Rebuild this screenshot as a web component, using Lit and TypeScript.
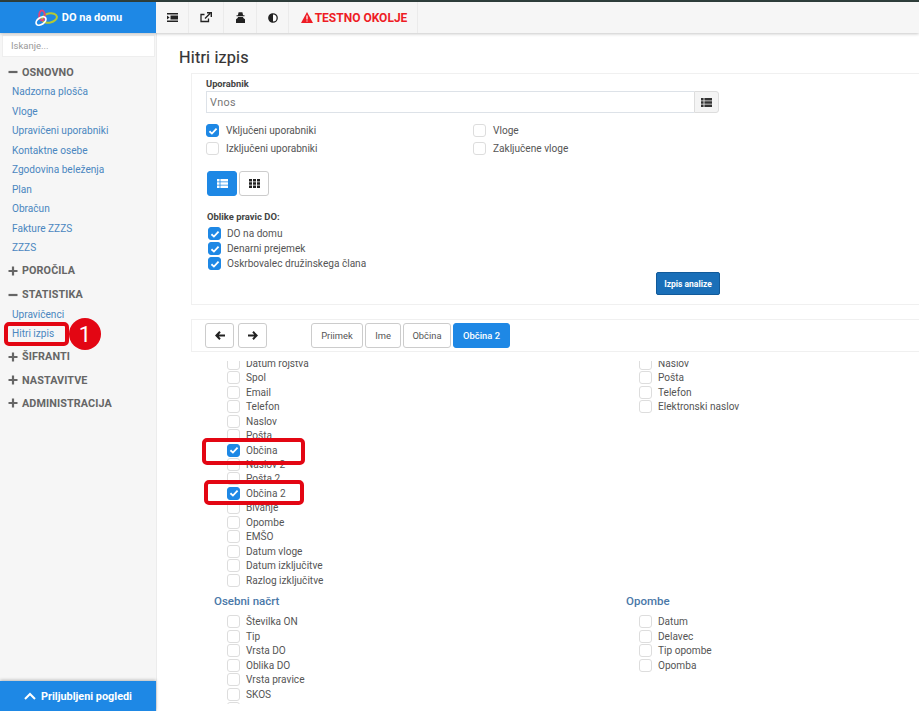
import { LitElement, html, css } from "lit";
import { customElement } from "lit/decorators.js";

const check = html`<svg viewBox="0 0 14 14" width="10" height="10"><path d="M2 7.4 5.5 10.6 12 3.8" fill="none" stroke="#fff" stroke-width="2.6"/></svg>`;
const cb = (on: boolean) => html`<span class="cb ${on ? "on" : ""}">${on ? check : ""}</span>`;
const row = (label: string, on = false) => html`<div class="row">${cb(on)}<span>${label}</span></div>`;

const plus = html`<svg class="pm" viewBox="0 0 10 10"><path d="M5 .5v9M.5 5h9" stroke="#666" stroke-width="2.2" fill="none"/></svg>`;
const minus = html`<svg class="pm" viewBox="0 0 10 10"><path d="M.5 5h9" stroke="#666" stroke-width="2.2" fill="none"/></svg>`;

@customElement("app-root")
export class AppRoot extends LitElement {
  static styles = css`
    :host { display: block; width: 919px; height: 711px; overflow: hidden; position: relative; background: #fff;
      font-family: Roboto, "Liberation Sans", sans-serif; color: #555; font-size: 10.1px; }
    .top { height: 2px; background: #2f3f3c; }
    .bar { height: 31px; display: flex; background: #f6f6f6; box-shadow: 0 1px 3px rgba(0,0,0,.22); position: relative; z-index: 2; }
    .brand { width: 156px; background: #1e88e5; display: flex; align-items: center; justify-content: center; gap: 4px; color: #fff;
      font-weight: 700; font-size: 11px; box-sizing: border-box; padding-right: 0; }
    .tool { display: flex; align-items: center; justify-content: center; border-right: 1px solid #ebebeb; height: 100%; box-sizing: border-box; }
    .t1 { width: 33px; } .t2 { width: 35px; } .t3 { width: 33px; } .t4 { width: 32px; }
    .warn { width: 129px; gap: 2px; color: #ee1c25; font-weight: 700; font-size: 12px; padding-left: 2px; }
    .main { display: flex; height: 678px; }
    aside { width: 157px; flex: none; background: #f6f6f6; border-right: 1px solid #ececec; box-sizing: border-box; display: flex; flex-direction: column; position: relative; }
    .search { margin: 2px 1px 0 2px; height: 22px; background: #fff; border: 1px solid #eee; box-sizing: border-box; color: #999; font-size: 9.5px; line-height: 20px; padding-left: 8px; }
    nav { flex: 1; padding-top: 5.7px; }
    .h { display: flex; align-items: center; height: 19.5px; padding-left: 8px; gap: 4px; font-weight: 700; font-size: 10.8px; color: #666; letter-spacing: .1px; }
    .g1 { margin-top: 3.2px; } .g2 { margin-top: 4.8px; } .g3 { margin-top: 4px; } .g4 { margin-top: 3.6px; }
    .pm { width: 10px; height: 10px; flex: none; }
    .l { height: 19.5px; line-height: 19.5px; padding-left: 12px; color: #4a86c0; font-size: 10.1px; }
    .fav { height: 30px; background: #1e88e5; color: #fff; font-weight: 700; font-size: 10.85px; display: flex; align-items: center; justify-content: center; gap: 5px; box-shadow: 0 -1px 3px rgba(0,0,0,.25); }
    .content { flex: 1; min-width: 0; padding-left: 23px; display: flex; flex-direction: column; }
    h1 { margin: 15px 0 5px -1px; font-size: 16.2px; line-height: 20px; font-weight: 400; color: #333; -webkit-text-stroke: .2px #333; letter-spacing: .2px; }
    .panel { margin-left: 11px; border: 1px solid #f0f0f0; border-right: 0; box-sizing: border-box; }
    .p1 { height: 232px; padding: 4px 14px 0; position: relative; }
    .lab { font-weight: 700; font-size: 9.3px; color: #444; line-height: 12px; }
    .inp { display: flex; width: 513px; height: 22px; margin-top: 1px; }
    .inp .f { flex: 1; border: 1px solid #dde2e8; border-right: 0; color: #777; font-size: 10.8px; line-height: 22px; padding-left: 3px; letter-spacing: .3px; }
    .inp .b { width: 25px; background: #f4f4f4; border: 1px solid #ddd; border-radius: 0 3px 3px 0; display: flex; align-items: center; justify-content: center; box-sizing: border-box; }
    .opts { display: grid; grid-template-columns: 267px auto; margin-top: 9px; }
    .opts .row { height: 17.6px; gap: 7px; }
    .row { display: flex; align-items: center; height: 14.47px; gap: 6px; white-space: nowrap; font-size: 10.1px; color: #555; }
    .cb { width: 13px; height: 13px; flex: none; box-sizing: border-box; border: 1px solid #ddd; border-radius: 3px; background: #fff; display: inline-flex; align-items: center; justify-content: center; }
    .cb.on { background: #1e88e5; border-color: #1e88e5; }
    .views { display: flex; gap: 2px; margin: 14px 0 0 1px; }
    .vb { width: 30px; height: 25px; box-sizing: border-box; border: 1px solid #ccc; border-radius: 3px; display: flex; align-items: center; justify-content: center; }
    .vb.on { background: #1e88e5; border-color: #1e88e5; }
    .lab2 { margin: 15px 0 3px 1px; font-size: 9.45px; }
    .forms { margin-left: 2px; }
    .forms .row { height: 15.1px; }
    .go { position: absolute; left: 464px; top: 198px; width: 64px; height: 23px; box-sizing: border-box; background: #1a6fb8; border: 1px solid #115a9a; border-radius: 2px; color: #fff; font-weight: 700; font-size: 8.5px; display: flex; align-items: center; justify-content: center; }
    .p2 { margin-top: 14px; height: 33px; padding: 3px 14px 3px 13px; display: flex; gap: 2px; box-sizing: border-box; }
    .btn { height: 25px; box-sizing: border-box; border: 1px solid #ccc; border-radius: 3px; background: #fff; display: flex; align-items: center; justify-content: center; font-size: 9.4px; color: #555; }
    .btn.active { background: #1e88e5; border-color: #1e88e5; color: #fff; font-weight: 500; }
    .arr { width: 29px; margin-right: 2px; }
    .sp { width: 38px; }
    .w52 { width: 52px; } .w36 { width: 36px; } .w48 { width: 48px; } .w57 { width: 57px; }
    .scroll { flex: 1; min-height: 0; overflow: hidden; margin: 9px 0 7px; }
    .grid { display: grid; grid-template-columns: 412px 1fr; margin: -5px 0 0 11px; padding-left: 23px; }
    .grid h3 { margin: 4px 0 0 0; font-size: 11.5px; line-height: 19px; font-weight: 500; color: #4a78a8; height: 23px; }
    .list { padding-left: 13px; }
    .mark { position: absolute; border: 4px solid #e30613; border-radius: 5px; box-sizing: border-box; pointer-events: none; z-index: 3; }
    .m1 { left: 4px; top: 322px; width: 65px; height: 24px; }
    .m2 { left: 202px; top: 438px; width: 103px; height: 27px; }
    .m3 { left: 204px; top: 480px; width: 100px; height: 25px; }
    .num { position: absolute; left: 69px; top: 318px; width: 32px; height: 32px; border-radius: 50%; background: #e30613; color: #fff; font-size: 22px; display: flex; align-items: center; justify-content: center; z-index: 3; }
  `;

  render() {
    const logo = html`<svg width="24" height="20" viewBox="0 0 24 20">
      <ellipse cx="15.5" cy="10" rx="7.5" ry="4.6" fill="none" stroke="#b5c934" stroke-width="2" transform="rotate(-12 15.5 10)"/>
      <ellipse cx="8" cy="7.5" rx="2.8" ry="5" fill="none" stroke="#e0457b" stroke-width="2"/>
      <ellipse cx="7" cy="13" rx="5.5" ry="3.4" fill="none" stroke="#fff" stroke-width="1.8" transform="rotate(-35 7 13)"/>
    </svg>`;
    const listIcon = (c: string) => html`<svg width="11" height="9" viewBox="0 0 11 9"><path fill="${c}" d="M0 0h2.6v2.4H0zM3.4 0H11v2.4H3.4zM0 3.3h2.6v2.4H0zM3.4 3.3H11v2.4H3.4zM0 6.6h2.6V9H0zM3.4 6.6H11V9H3.4z"/></svg>`;
    const left = ["Datum rojstva", "Spol", "Email", "Telefon", "Naslov", "Pošta"];
    return html`
      <div class="top"></div>
      <div class="bar">
        <div class="brand">${logo}<span>DO na domu</span></div>
        <div class="tool t1"><svg width="11" height="9" viewBox="0 0 11 9"><path fill="#222" d="M0 0h11v1.6H0zM3.5 2.4H11v4.2H3.5zM0 7.4h11V9H0zM0 2.6l2.6 1.9L0 6.4z"/></svg></div>
        <div class="tool t2"><svg width="12" height="11" viewBox="0 0 12 11"><path d="M8.5 6.5v3H1v-7h3.5" fill="none" stroke="#222" stroke-width="1.3"/><path d="M5 6.5 10 1.6M7 .7h4.3V5" fill="none" stroke="#222" stroke-width="1.4"/></svg></div>
        <div class="tool t3"><svg width="9" height="11" viewBox="0 0 9 11"><path fill="#222" d="M2.6.3h3.8l.7 3h1.4v1H.5v-1h1.4zM2 5h5l.3 1L9 7.2V11H0V7.2L1.7 6z"/></svg></div>
        <div class="tool t4"><svg width="10" height="10" viewBox="0 0 10 10"><circle cx="5" cy="5" r="4.2" fill="#fff" stroke="#222" stroke-width="1.3"/><path d="M5 .8a4.2 4.2 0 0 0 0 8.4z" fill="#222"/></svg></div>
        <div class="tool warn"><svg width="12" height="11" viewBox="0 0 12 11"><path fill="#ee1c25" d="M6 0 12 11H0z"/><path d="M6 3.5v4M6 8.4v1.2" stroke="#fff" stroke-width="1.2"/></svg><span>TESTNO OKOLJE</span></div>
      </div>
      <div class="main">
        <aside>
          <div class="search">Iskanje...</div>
          <nav>
            <div class="h">${minus}<span>OSNOVNO</span></div>
            ${["Nadzorna plošča", "Vloge", "Upravičeni uporabniki", "Kontaktne osebe", "Zgodovina beleženja", "Plan", "Obračun", "Fakture ZZZS", "ZZZS"].map(t => html`<div class="l">${t}</div>`)}
            <div class="h g1">${plus}<span>POROČILA</span></div>
            <div class="h g2">${minus}<span>STATISTIKA</span></div>
            <div class="l">Upravičenci</div>
            <div class="l">Hitri izpis</div>
            <div class="h g1">${plus}<span>ŠIFRANTI</span></div>
            <div class="h g3">${plus}<span>NASTAVITVE</span></div>
            <div class="h g4">${plus}<span>ADMINISTRACIJA</span></div>
          </nav>
          <div class="fav"><svg width="12" height="8" viewBox="0 0 12 8"><path d="M1 7 6 2l5 5" fill="none" stroke="#fff" stroke-width="2"/></svg><span>Priljubljeni pogledi</span></div>
        </aside>
        <div class="content">
          <h1>Hitri izpis</h1>
          <div class="panel p1">
            <div class="lab">Uporabnik</div>
            <div class="inp"><div class="f">Vnos</div><div class="b">${listIcon("#333")}</div></div>
            <div class="opts">
              ${row("Vključeni uporabniki", true)}${row("Vloge")}
              ${row("Izključeni uporabniki")}${row("Zaključene vloge")}
            </div>
            <div class="views">
              <div class="vb on">${listIcon("#fff")}</div>
              <div class="vb"><svg width="11" height="9" viewBox="0 0 11 9"><path d="M0 0h3v2.5H0zM4 0h3v2.5H4zM8 0h3v2.5H8zM0 3.3h3v2.5H0zM4 3.3h3v2.5H4zM8 3.3h3v2.5H8zM0 6.5h3V9H0zM4 6.5h3V9H4zM8 6.5h3V9H8z" fill="#222"/></svg></div>
            </div>
            <div class="lab lab2">Oblike pravic DO:</div>
            <div class="forms">
              ${row("DO na domu", true)}${row("Denarni prejemek", true)}${row("Oskrbovalec družinskega člana", true)}
            </div>
            <div class="go">Izpis analize</div>
          </div>
          <div class="panel p2">
            <div class="btn arr"><svg width="10" height="9" viewBox="0 0 10 9"><path d="M5 .8 1.4 4.5 5 8.2M2 4.5h8" fill="none" stroke="#222" stroke-width="2"/></svg></div>
            <div class="btn arr"><svg width="10" height="9" viewBox="0 0 10 9"><path d="M5 .8l3.6 3.7L5 8.2M8 4.5H0" fill="none" stroke="#222" stroke-width="2"/></svg></div>
            <div class="sp"></div>
            <div class="btn w52">Priimek</div>
            <div class="btn w36">Ime</div>
            <div class="btn w48">Občina</div>
            <div class="btn active w57">Občina 2</div>
          </div>
          <div class="scroll">
            <div class="grid">
              <div class="list">
                ${left.map(t => row(t))}
                ${row("Občina", true)}${row("Naslov 2")}${row("Pošta 2")}${row("Občina 2", true)}
                ${["Bivanje", "Opombe", "EMŠO", "Datum vloge", "Datum izključitve", "Razlog izključitve"].map(t => row(t))}
              </div>
              <div class="list">
                ${["Naslov", "Pošta", "Telefon", "Elektronski naslov"].map(t => row(t))}
              </div>
              <h3>Osebni načrt</h3>
              <h3>Opombe</h3>
              <div class="list">
                ${["Številka ON", "Tip", "Vrsta DO", "Oblika DO", "Vrsta pravice", "SKOS", "Izvajalec"].map(t => row(t))}
              </div>
              <div class="list">
                ${["Datum", "Delavec", "Tip opombe", "Opomba"].map(t => row(t))}
              </div>
            </div>
          </div>
        </div>
      </div>
      <div class="mark m1"></div>
      <div class="num">1</div>
      <div class="mark m2"></div>
      <div class="mark m3"></div>
    `;
  }
}
